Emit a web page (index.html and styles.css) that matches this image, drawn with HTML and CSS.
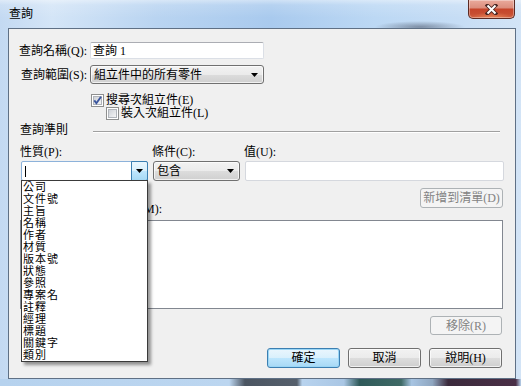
FILE: index.html
```html
<!DOCTYPE html>
<html lang="zh-Hant">
<head>
  <meta charset="UTF-8" />
  <title>查詢</title>
  <link rel="stylesheet" href="styles.css">
</head>
<body>
  <div class="window">
    <div class="titlebar">
      <span class="title">查詢</span>
      <div class="close-btn">
        <svg width="13" height="11" viewBox="0 0 13 11">
          <path d="M2.5 1.5 L10.5 9.5 M10.5 1.5 L2.5 9.5" stroke="#4a2622" stroke-width="3.8" stroke-linecap="square" />
          <path d="M2.5 1.5 L10.5 9.5 M10.5 1.5 L2.5 9.5" stroke="#fff" stroke-width="2" />
        </svg>
      </div>
    </div>

    <div class="frame-row">
      <div class="client">
        <div class="form-grid">
          <label class="lbl-right">查詢名稱(Q):</label>
          <div class="textbox name-box">查詢 1</div>
          <label class="lbl-right">查詢範圍(S):</label>
          <div class="combo">
            <span>組立件中的所有零件</span>
            <svg class="arrow" width="7" height="4" viewBox="0 0 7 4"><polygon points="0,0 7,0 3.5,4" fill="#000" /></svg>
          </div>
        </div>

        <div class="check-row first">
          <svg class="checkbox" width="13" height="13" viewBox="0 0 13 13">
            <defs>
              <linearGradient id="cb1" x1="0" y1="0" x2="1" y2="1">
                <stop offset="0" stop-color="#cbcfd5" />
                <stop offset="1" stop-color="#f7f7f7" />
              </linearGradient>
            </defs>
            <rect x="0.5" y="0.5" width="12" height="12" fill="#fff" stroke="#8e8f8f" />
            <rect x="2.5" y="2.5" width="8" height="8" fill="url(#cb1)" stroke="#b0b4ba" />
            <path d="M3.3 6.4 L5.4 9.2 L10 2.8" fill="none" stroke="#3a559e" stroke-width="1.9" />
          </svg>
          <span>搜尋次組立件(E)</span>
        </div>
        <div class="check-row second">
          <svg class="checkbox" width="13" height="13" viewBox="0 0 13 13">
            <defs>
              <linearGradient id="cb2" x1="0" y1="0" x2="1" y2="1">
                <stop offset="0" stop-color="#cbcfd5" />
                <stop offset="1" stop-color="#f7f7f7" />
              </linearGradient>
            </defs>
            <rect x="0.5" y="0.5" width="12" height="12" fill="#fff" stroke="#8e8f8f" />
            <rect x="2.5" y="2.5" width="8" height="8" fill="url(#cb2)" stroke="#b0b4ba" />
          </svg>
          <span>裝入次組立件(L)</span>
        </div>

        <div class="group-head">
          <span class="group-title">查詢準則</span>
          <div class="group-line"></div>
        </div>

        <div class="criteria">
          <label class="col-lbl">性質(P):</label>
          <label class="col-lbl">條件(C):</label>
          <label class="col-lbl">值(U):</label>

          <div class="edit-combo">
            <span class="caret"></span>
            <div class="drop-btn">
              <svg width="7" height="4" viewBox="0 0 7 4"><polygon points="0,0 7,0 3.5,4" fill="#000" /></svg>
            </div>
            <ul class="drop-list">
              <li>公司</li>
              <li>文件號</li>
              <li>主旨</li>
              <li>名稱</li>
              <li>作者</li>
              <li>材質</li>
              <li>版本號</li>
              <li>狀態</li>
              <li>參照</li>
              <li>專案名</li>
              <li>註釋</li>
              <li>經理</li>
              <li>標題</li>
              <li>關鍵字</li>
              <li>類別</li>
            </ul>
          </div>
          <div class="combo">
            <span>包含</span>
            <svg class="arrow" width="7" height="4" viewBox="0 0 7 4"><polygon points="0,0 7,0 3.5,4" fill="#000" /></svg>
          </div>
          <div class="textbox value-box"></div>
        </div>

        <div class="add-row">
          <label class="list-lbl">準則清單(M):</label>
          <button class="btn disabled add-btn">新增到清單(D)</button>
        </div>

        <div class="listbox"></div>

        <div class="remove-row">
          <button class="btn disabled remove-btn">移除(R)</button>
        </div>

        <div class="footer">
          <button class="btn default">確定</button>
          <button class="btn">取消</button>
          <button class="btn">說明(H)</button>
        </div>
      </div>
    </div>

    <div class="frame-bottom"></div>
  </div>
</body>
</html>
```

FILE: styles.css
```css
body {
  margin: 0;
  font-family: "Liberation Serif", "Noto Sans CJK TC", serif;
  font-size: 12px;
  color: #000;
  background: #b9d4ef;
}

.window {
  width: 521px;
  height: 386px;
  display: flex;
  flex-direction: column;
  overflow: hidden;
  background: linear-gradient(to right, #c3d9f2 0%, #d4e5f7 10%, #b9d4f1 30%, #a9caee 52%, #bcd8f4 72%, #c6ddf5 88%, #d3e4f6 100%);
}

/* title bar */
.titlebar {
  height: 28px;
  flex-shrink: 0;
  display: flex;
  justify-content: space-between;
  align-items: flex-start;
  padding: 0 6px 0 9px;
  background:
    radial-gradient(ellipse 45px 6px at 420px 27px, rgba(70, 80, 100, 0.55), transparent),
    linear-gradient(to bottom, rgba(255, 255, 255, 0.45) 0, rgba(255, 255, 255, 0.15) 5px, transparent 18px);
}

.title {
  line-height: 14px;
  margin-top: 7px;
}

.close-btn {
  width: 47px;
  height: 19px;
  box-sizing: border-box;
  border: 1px solid #5c2a23;
  border-top: none;
  border-radius: 0 0 5px 5px;
  display: flex;
  justify-content: center;
  align-items: center;
  background:
    radial-gradient(ellipse 20px 6px at 50% 100%, rgba(240, 150, 100, 0.7), transparent),
    linear-gradient(to bottom, #eaaa9c 0%, #dc8f7e 42%, #c6452b 52%, #c74d31 75%, #d2603f 100%);
  box-shadow: inset 0 0 0 1px rgba(255, 255, 255, 0.35);
}

/* frame + client */
.frame-row {
  height: 351px;
  flex-shrink: 0;
  padding: 0 5px 0 8px;
}

.client {
  position: relative;
  width: 508px;
  height: 351px;
  box-sizing: border-box;
  border: 1px solid #5f7085;
  background: #f0f0f0;
}

.frame-bottom {
  height: 7px;
  background: linear-gradient(to right, #b6d2ee 0%, #bcd6f0 44%, #4b5562 47%, #56606c 57%, #b8d3ee 58%, #a9c6e4 66%, #2f5a5a 69%, #3f6a66 77%, #a7c4e2 79%, #8fa6c0 83%, #3b2a3c 86%, #4a2f46 99%, #b9d4ef 100%);
}

/* top form */
.form-grid {
  display: grid;
  grid-template-columns: 78px 174px;
  grid-template-rows: 17px 19px;
  column-gap: 3px;
  row-gap: 6px;
  align-items: center;
  margin-top: 13px;
}

.lbl-right {
  text-align: right;
  line-height: 14px;
  white-space: nowrap;
}

.textbox {
  box-sizing: border-box;
  height: 100%;
  background: #fff;
  border: 1px solid #dbdfe6;
  border-top-color: #abadb3;
  border-radius: 2px;
  line-height: 14px;
  padding-left: 2px;
  display: flex;
  align-items: center;
}

.combo {
  box-sizing: border-box;
  height: 100%;
  display: flex;
  justify-content: space-between;
  align-items: center;
  padding: 0 5px 0 3px;
  border: 1px solid #707070;
  border-radius: 3px;
  line-height: 14px;
  background: linear-gradient(to bottom, #f2f2f2 0%, #ebebeb 50%, #dddddd 50%, #cfcfcf 100%);
  box-shadow: inset 0 0 0 1px rgba(255, 255, 255, 0.7);
}

/* checkboxes */
.check-row {
  display: flex;
  align-items: center;
  gap: 2px;
  height: 13px;
  line-height: 13px;
}

.check-row.first {
  margin-top: 10px;
  padding-left: 82px;
}

.check-row.second {
  padding-left: 97px;
}

.checkbox {
  flex-shrink: 0;
}

/* group header */
.group-head {
  display: flex;
  height: 14px;
  margin-top: 3px;
}

.group-title {
  width: 73px;
  padding-left: 11px;
  line-height: 14px;
}

.group-line {
  flex: 1;
  margin: 8px 15px 0 0;
  height: 0;
  border-top: 1px solid #a0a0a0;
  border-bottom: 1px solid #fff;
}

/* criteria row */
.criteria {
  display: grid;
  grid-template-columns: 127px 87px 259px;
  grid-template-rows: 14px 20px;
  column-gap: 5px;
  row-gap: 2px;
  margin: 8px 0 0 12px;
}

.col-lbl {
  line-height: 14px;
  margin-left: -1px;
}

.edit-combo {
  position: relative;
  box-sizing: border-box;
  display: flex;
  justify-content: space-between;
  align-items: center;
  background: #fff;
  border: 1px solid #8db2da;
  border-radius: 2px;
}

.caret {
  width: 1px;
  height: 11px;
  margin-left: 3px;
  background: #000;
}

.drop-btn {
  box-sizing: border-box;
  width: 17px;
  height: calc(100% + 2px);
  margin: -1px -1px -1px 0;
  display: flex;
  justify-content: center;
  align-items: center;
  border: 1px solid #3c7fb1;
  border-radius: 0 2px 2px 0;
  background: linear-gradient(to bottom, #eaf6fd 0%, #d9f0fc 50%, #bee6fd 50%, #a7d9f5 100%);
}

.drop-list {
  position: absolute;
  z-index: 10;
  top: 100%;
  left: -1px;
  width: 127px;
  box-sizing: border-box;
  margin: 0;
  padding: 0;
  list-style: none;
  background: #fff;
  border: 1px solid #3a3a3a;
  box-shadow: 3px 3px 3px rgba(0, 0, 0, 0.4);
}

.drop-list li {
  height: 12px;
  font-size: 11px;
  line-height: 12px;
  letter-spacing: 1px;
  padding-left: 1px;
  white-space: nowrap;
  overflow: hidden;
}

.value-box {
  border-color: #d5d8de;
}

/* add row + list */
.add-row {
  display: flex;
  justify-content: space-between;
  align-items: flex-start;
  margin-top: 7px;
  padding: 0 12px 0 11px;
}

.list-lbl {
  margin-top: 14px;
  margin-left: 72px;
  line-height: 14px;
  white-space: nowrap;
}

.btn {
  box-sizing: border-box;
  font: inherit;
  color: #000;
  padding: 0;
  line-height: 14px;
  border: 1px solid #707070;
  border-radius: 3px;
  background: linear-gradient(to bottom, #f2f2f2 0%, #ebebeb 50%, #dddddd 50%, #cfcfcf 100%);
  box-shadow: inset 0 0 0 1px rgba(255, 255, 255, 0.7);
  display: flex;
  justify-content: center;
  align-items: center;
  width: 73px;
  height: 20px;
}

.btn.disabled {
  color: #838383;
  border-color: #adb2b5;
  background: #f4f4f4;
  box-shadow: none;
}

.btn.default {
  border-color: #3c7fb1;
  background: linear-gradient(to bottom, #eaf6fd 0%, #d9f0fc 50%, #bee6fd 50%, #a7d9f5 100%);
  box-shadow: inset 0 0 0 1px #9ad6f6;
}

.add-btn {
  width: 83px;
}

.listbox {
  width: 483px;
  height: 89px;
  box-sizing: border-box;
  margin: 4px 0 0 11px;
  background: #fff;
  border: 1px solid #828790;
}

.remove-row {
  display: flex;
  justify-content: flex-end;
  margin-top: 7px;
  padding-right: 13px;
}

.remove-btn {
  width: 72px;
  height: 19px;
}

.footer {
  display: flex;
  justify-content: flex-end;
  gap: 8px;
  margin-top: 13px;
  padding-right: 13px;
}
```
